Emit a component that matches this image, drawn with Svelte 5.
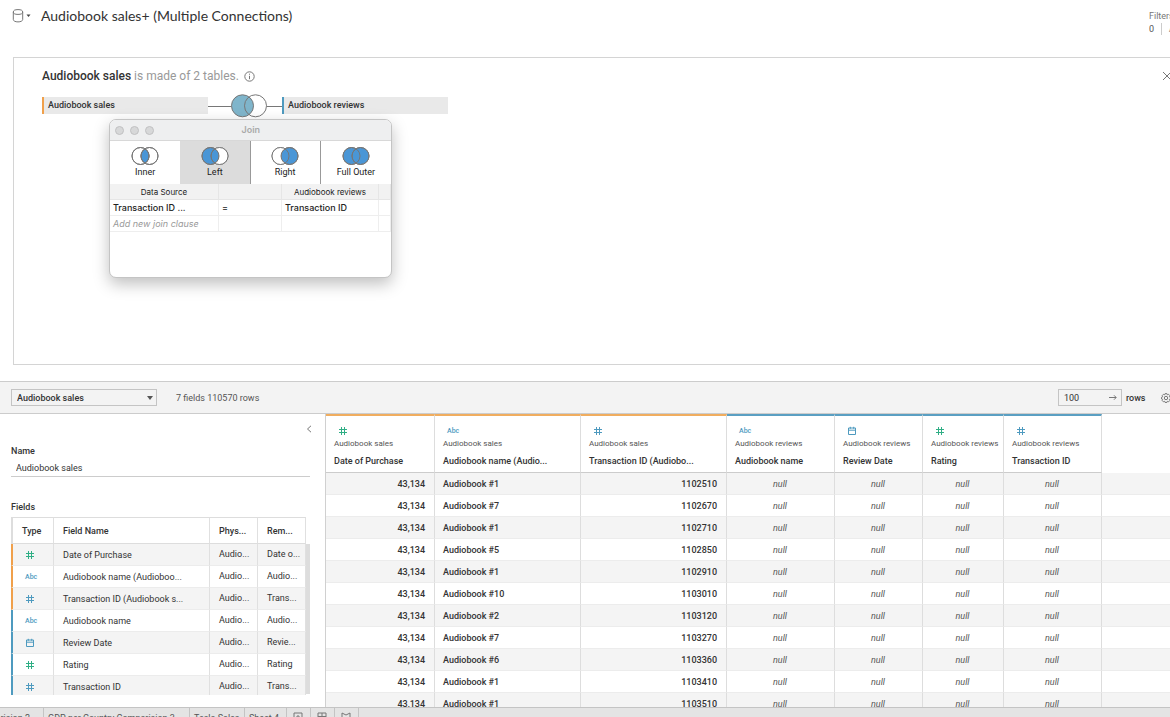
<script lang="ts">
  type Kind = 'number' | 'text' | 'date';

  interface Field {
    kind: Kind;
    measure?: boolean;
    source: 'sales' | 'reviews';
    name: string;
    heading: string;
    remote: string;
    width: number;
  }

  const fields: Field[] = [
    { kind: 'number', measure: true, source: 'sales', name: 'Date of Purchase', heading: 'Date of Purchase', remote: 'Date o...', width: 109 },
    { kind: 'text', source: 'sales', name: 'Audiobook name (Audioboo...', heading: 'Audiobook name (Audio...', remote: 'Audio...', width: 146 },
    { kind: 'number', source: 'sales', name: 'Transaction ID (Audiobook s...', heading: 'Transaction ID (Audiobo...', remote: 'Trans...', width: 146 },
    { kind: 'text', source: 'reviews', name: 'Audiobook name', heading: 'Audiobook name', remote: 'Audio...', width: 108 },
    { kind: 'date', source: 'reviews', name: 'Review Date', heading: 'Review Date', remote: 'Revie...', width: 88 },
    { kind: 'number', measure: true, source: 'reviews', name: 'Rating', heading: 'Rating', remote: 'Rating', width: 81 },
    { kind: 'number', source: 'reviews', name: 'Transaction ID', heading: 'Transaction ID', remote: 'Trans...', width: 98 }
  ];

  const rows = [
    ['Audiobook #1', '1102510'],
    ['Audiobook #7', '1102670'],
    ['Audiobook #1', '1102710'],
    ['Audiobook #5', '1102850'],
    ['Audiobook #1', '1102910'],
    ['Audiobook #10', '1103010'],
    ['Audiobook #2', '1103120'],
    ['Audiobook #7', '1103270'],
    ['Audiobook #6', '1103360'],
    ['Audiobook #1', '1103410'],
    ['Audiobook #1', '1103510']
  ];

  const joins = ['Inner', 'Left', 'Right', 'Full Outer'];
  let join = $state('Left');
  let tableName = $state('Audiobook sales');
  let limit = $state('100');
</script>

{#snippet typeIcon(field: Field)}
  {#if field.kind === 'text'}
    <span class="abc">Abc</span>
  {:else if field.kind === 'date'}
    <svg class="type" viewBox="0 0 10 10" aria-label="Date">
      <path d="M1.5 2h7v6.5h-7zM1.5 4.2h7M3.3.8v2M6.7.8v2" />
    </svg>
  {:else}
    <svg class="type" class:measure={field.measure} viewBox="0 0 10 10" aria-label="Number">
      <path d="M3.5 1v8M6.5 1v8M1 3.5h8M1 6.5h8" />
    </svg>
  {/if}
{/snippet}

{#snippet venn(kind: string)}
  <svg class="venn" viewBox="0 0 30 20" aria-hidden="true">
    <circle cx="10.5" cy="10" r="8.5" class:fill={kind === 'Left' || kind === 'Full Outer'} />
    <circle
      cx="19.5"
      cy="10"
      r="8.5"
      class:fill={kind === 'Right' || kind === 'Full Outer'}
    />
    {#if kind === 'Inner'}
      <path class="fill" d="M15 2.8a8.5 8.5 0 0 1 0 14.4a8.5 8.5 0 0 1 0-14.4z" />
    {:else if kind === 'Left'}
      <path class="blank" d="M15 2.8a8.5 8.5 0 1 1 0 14.4a8.5 8.5 0 0 0 0-14.4z" />
    {:else if kind === 'Right'}
      <path class="blank" d="M15 2.8a8.5 8.5 0 1 0 0 14.4a8.5 8.5 0 0 1 0-14.4z" />
    {/if}
    <circle cx="10.5" cy="10" r="8.5" />
    <circle cx="19.5" cy="10" r="8.5" />
  </svg>
{/snippet}

<div class="page">
  <header>
    <button class="source" type="button" aria-label="Data source">
      <svg width="20" height="16" viewBox="0 0 20 16">
        <ellipse cx="6" cy="4" rx="4.7" ry="2.4" />
        <path d="M1.3 4v7.5c0 1.4 2 2.4 4.7 2.4s4.7-1 4.7-2.4V4" />
        <path class="solid" d="M14.5 6.5h4l-2 2.6z" />
      </svg>
    </button>
    <h1>Audiobook sales+ (Multiple Connections)</h1>
    <div class="filters">
      <span>Filters</span>
      <div><b>0</b><a href="#add">Add</a></div>
    </div>
  </header>

  <section class="canvas">
    <div class="summary">
      <h2>Audiobook sales <span>is made of 2 tables.</span></h2>
      <svg width="11" height="11" viewBox="0 0 11 11" aria-label="Info">
        <circle cx="5.5" cy="5.5" r="4.7" />
        <path d="M5.5 4.8v3.4M5.5 2.7v1" />
      </svg>
      <button class="close" type="button" aria-label="Close">
        <svg width="10" height="10" viewBox="0 0 10 10"><path d="M1 1l8 8M9 1l-8 8" /></svg>
      </button>
    </div>

    <div class="relation">
      <div class="pill sales">Audiobook sales</div>
      <svg width="74" height="25" viewBox="0 0 74 25" aria-label="Left join">
        <path d="M0 13.5h23M59 13.5h15" />
        <circle class="left" cx="34.5" cy="12.8" r="11" />
        <circle cx="47.5" cy="12.8" r="11" />
      </svg>
      <div class="pill reviews">Audiobook reviews</div>
    </div>

    <div class="dialog" role="dialog" aria-label="Join">
      <div class="titlebar">
        <button type="button" aria-label="Close window"></button>
        <button type="button" aria-label="Minimize"></button>
        <button type="button" aria-label="Zoom"></button>
        <strong>Join</strong>
      </div>
      <div class="kinds">
        {#each joins as kind (kind)}
          <button
            type="button"
            class:active={join === kind}
            aria-pressed={join === kind}
            onclick={() => (join = kind)}
          >
            {@render venn(kind)}
            {kind}
          </button>
        {/each}
      </div>
      <table>
        <colgroup><col class="a" /><col class="b" /><col class="c" /><col /></colgroup>
        <thead>
          <tr><th>Data Source</th><th></th><th>Audiobook reviews</th><th></th></tr>
        </thead>
        <tbody>
          <tr><td>Transaction ID ...</td><td>=</td><td>Transaction ID</td><td></td></tr>
          <tr><td class="hint">Add new join clause</td><td></td><td></td><td></td></tr>
        </tbody>
      </table>
    </div>
  </section>

  <div class="toolbar">
    <div class="picker">
      <select aria-label="Table">
        <option>Audiobook sales</option>
        <option>Audiobook reviews</option>
      </select>
      <svg width="6" height="4" viewBox="0 0 6 4"><path d="M0 0h6L3 4z" /></svg>
    </div>
    <span class="count">7 fields 110570 rows</span>
    <div class="limit">
      <input id="limit" bind:value={limit} />
      <svg width="8" height="7" viewBox="0 0 8 7"><path d="M0 3.5h7M5 1.3l2.2 2.2L5 5.7" /></svg>
    </div>
    <label for="limit">rows</label>
    <button class="gear" type="button" aria-label="Settings">
      <svg width="10" height="10" viewBox="0 0 10 10">
        <path d="M4 .7h2l.4 1.1 1.2-.5 1.2 1.3-.5 1.1 1.1.5v1.8l-1.1.5.5 1.1-1.2 1.2-1.2-.5-.4 1.1H4l-.4-1.1-1.2.5-1.2-1.2.5-1.1-1.1-.5V4.2l1.1-.5-.5-1.1 1.2-1.3 1.2.5z" />
        <circle cx="5" cy="5" r="1.7" />
      </svg>
    </button>
  </div>

  <main>
    <aside>
      <button class="collapse" type="button" aria-label="Collapse">
        <svg width="6" height="8" viewBox="0 0 6 8"><path d="M5 .8L1.5 4 5 7.2" /></svg>
      </button>
      <label for="name">Name</label>
      <input id="name" bind:value={tableName} />
      <h3>Fields</h3>
      <div class="scroller">
        <table>
          <colgroup><col class="t" /><col class="n" /><col class="p" /><col class="p" /></colgroup>
          <thead>
            <tr><th>Type</th><th>Field Name</th><th>Phys...</th><th>Rem...</th></tr>
          </thead>
          <tbody>
            {#each fields as field (field.name)}
              <tr>
                <td class={field.source}>{@render typeIcon(field)}</td>
                <td>{field.name}</td>
                <td class="origin">Audio...</td>
                <td class="origin">{field.remote}</td>
              </tr>
            {/each}
          </tbody>
        </table>
        <div class="thumb"></div>
      </div>
    </aside>

    <div class="grid">
      <table>
        <colgroup>
          {#each fields as field (field.name)}
            <col style:width="{field.width}px" />
          {/each}
          <col />
        </colgroup>
        <thead>
          <tr>
            {#each fields as field (field.name)}
              <th class={field.source}>
                <div class="icon">{@render typeIcon(field)}</div>
                <small>Audiobook {field.source}</small>
                <span>{field.heading}</span>
              </th>
            {/each}
            <th class="rest"></th>
          </tr>
        </thead>
        <tbody>
          {#each rows as [book, id]}
            <tr>
              <td class="num">43,134</td>
              <td>{book}</td>
              <td class="num">{id}</td>
              <td class="null">null</td>
              <td class="null">null</td>
              <td class="null">null</td>
              <td class="null">null</td>
              <td class="rest"></td>
            </tr>
          {/each}
        </tbody>
      </table>
    </div>
  </main>

  <footer>
    <a class="first" href="#s1">Comparision 2</a>
    <a class="second" href="#s2">GDP per Country Comparision 3</a>
    <a class="third" href="#s3">Tesla Sales</a>
    <a class="fourth" href="#s4">Sheet 4</a>
    <button type="button" aria-label="New worksheet">
      <svg width="10" height="10" viewBox="0 0 10 10"><path d="M1 1h8v8H1zM5 3v4M3 5h4" /></svg>
    </button>
    <button type="button" aria-label="New dashboard">
      <svg width="10" height="10" viewBox="0 0 10 10"><path d="M1 1h8v8H1zM5 1v8M1 4.5h8" /></svg>
    </button>
    <button type="button" aria-label="New story">
      <svg width="10" height="10" viewBox="0 0 10 10"><path d="M1 1l4 2 4-2v8H1z" /></svg>
    </button>
  </footer>
</div>

<style>
  :global(body) {
    margin: 0;
    background: #fff;
  }

  .page {
    display: flex;
    flex-direction: column;
    height: 100vh;
    overflow: hidden;
    color: #333;
    font-family: Roboto, sans-serif;
    font-size: 9px;
    line-height: 12px;
  }

  .page * {
    box-sizing: border-box;
  }

  button,
  input,
  select {
    margin: 0;
    padding: 0;
    border: 0;
    background: none;
    color: inherit;
    font: inherit;
  }

  svg {
    display: block;
    flex: none;
    fill: none;
    stroke: #777;
    stroke-width: 1;
  }

  h1,
  h2,
  h3 {
    margin: 0;
  }

  table {
    table-layout: fixed;
    border-collapse: separate;
    border-spacing: 0;
  }

  th,
  td {
    padding: 0;
    overflow: hidden;
    white-space: nowrap;
    text-align: left;
  }

  header {
    display: flex;
    flex: none;
    height: 57px;
    padding-left: 12px;
  }

  .source {
    height: 16px;
    margin-top: 8px;
  }

  .solid {
    fill: #444;
    stroke: none;
  }

  h1 {
    margin: 6px 0 0 9px;
    font-family: Lato, sans-serif;
    font-size: 14px;
    font-weight: 400;
    line-height: 20px;
  }

  .filters {
    flex: none;
    width: 21px;
    margin: 10px 0 0 auto;
    color: #777;
    white-space: nowrap;
  }

  .filters div {
    display: flex;
    margin-top: 1px;
  }

  .filters b {
    flex: none;
    width: 13px;
    border-right: 1px solid #ccc;
    font-weight: 400;
    color: #555;
  }

  .filters a {
    margin-left: 7px;
    color: inherit;
    text-decoration: none;
  }

  .canvas {
    position: relative;
    flex: none;
    height: 308px;
    margin-left: 13px;
    padding: 9px 0 0 28px;
    border: 1px solid #d4d4d4;
    border-right: 0;
  }

  .summary {
    display: flex;
    align-items: center;
    height: 18px;
  }

  h2 {
    margin-right: 5px;
    font-size: 12px;
    font-weight: 500;
    line-height: 18px;
  }

  h2 span {
    color: #999;
    font-weight: 400;
  }

  .close {
    width: 8px;
    margin-left: auto;
  }

  .relation {
    display: flex;
    align-items: center;
    height: 25px;
    margin-top: 8px;
  }

  .pill {
    width: 166px;
    height: 17px;
    padding-left: 4px;
    border-left: 2px solid #f0a04b;
    background: #e9e9e9;
    font-weight: 500;
    line-height: 17px;
  }

  .pill.reviews {
    border-color: #4e9abf;
  }

  .left {
    fill: #7fb5cb;
  }

  .dialog {
    position: absolute;
    top: 61px;
    left: 95px;
    width: 283px;
    height: 159px;
    overflow: hidden;
    border: 1px solid #c4c4c4;
    border-radius: 7px;
    background: #fff;
    box-shadow: 0 6px 16px rgb(0 0 0 / 25%);
    color: #222;
    font-family: Inter, sans-serif;
  }

  .titlebar {
    display: grid;
    grid-template-columns: 9px 9px 9px 1fr;
    gap: 6px;
    align-items: center;
    height: 20px;
    padding: 0 108px 0 5px;
    background: #eeeff0;
  }

  .titlebar button {
    height: 9px;
    border: 1px solid #c0c0c2;
    border-radius: 50%;
    background: #d7d8d9;
  }

  .titlebar strong {
    padding-right: 23px;
    color: #aaa;
    font-weight: 600;
    text-align: right;
  }

  .kinds {
    display: grid;
    grid-template-columns: repeat(4, 1fr);
    height: 44px;
    border-top: 1px solid #d8d8d8;
  }

  .kinds button {
    display: flex;
    flex-direction: column;
    align-items: center;
    padding-top: 5px;
    border-right: 1px solid #999;
    font-family: Roboto, sans-serif;
  }

  .kinds button:first-child,
  .kinds button:last-child {
    border-right: 0;
  }

  .kinds .active {
    background: #dcdcdc;
  }

  .venn {
    width: 30px;
    height: 20px;
  }

  .venn .fill {
    fill: #4a96d6;
  }

  .venn .blank {
    fill: #fff;
    stroke: none;
  }

  .dialog table {
    width: 100%;
  }

  .dialog .a {
    width: 109px;
  }

  .dialog .b {
    width: 63px;
  }

  .dialog .c {
    width: 97px;
  }

  .dialog th {
    height: 16px;
    border-right: 1px solid #e6e6e6;
    border-bottom: 1px solid #e6e6e6;
    background: #f2f2f2;
    font-size: 8px;
    font-weight: 400;
    text-align: center;
  }

  .dialog td {
    height: 16px;
    padding-left: 3px;
    border-right: 1px solid #eee;
    border-bottom: 1px solid #eee;
    font-weight: 500;
  }

  .dialog .hint {
    color: #999;
    font-style: italic;
    font-weight: 400;
  }

  .toolbar {
    display: flex;
    flex: none;
    align-items: center;
    height: 33px;
    margin-top: 16px;
    padding-left: 11px;
    border-top: 1px solid #ccc;
    border-bottom: 1px solid #ccc;
    background: #f3f3f3;
  }

  .picker,
  .limit {
    display: flex;
    align-items: center;
    height: 17px;
    border: 1px solid #c4c4c4;
  }

  .picker {
    width: 146px;
    padding-right: 3px;
  }

  .picker select {
    flex: 1;
    height: 15px;
    padding-left: 5px;
    appearance: none;
    font-weight: 500;
  }

  .picker svg {
    fill: #555;
    stroke: none;
  }

  .count {
    margin-left: 19px;
    color: #555;
  }

  .limit {
    width: 64px;
    margin: 0 4px 0 auto;
    padding-right: 4px;
  }

  .limit input {
    flex: 1;
    min-width: 0;
    padding-left: 5px;
  }

  .toolbar label {
    width: 35px;
    font-weight: 500;
  }

  .gear {
    width: 9px;
  }

  main {
    display: flex;
    flex: 1;
    min-height: 0;
    overflow: hidden;
  }

  aside {
    display: flex;
    flex: none;
    flex-direction: column;
    width: 326px;
    padding: 11px 15px 0 11px;
    border-right: 1px solid #d0d0d0;
  }

  .collapse {
    align-self: flex-end;
    width: 4px;
    height: 8px;
  }

  aside label,
  h3 {
    font-size: 9px;
    font-weight: 500;
    line-height: 12px;
  }

  aside label {
    margin-top: 12px;
  }

  aside input {
    height: 18px;
    margin-top: 2px;
    padding-left: 5px;
    border-bottom: 1px solid #ccc;
  }

  h3 {
    margin: 24px 0 4px;
  }

  .scroller {
    display: flex;
    height: 178px;
    overflow: hidden;
  }

  .scroller table {
    flex: none;
    width: 295px;
  }

  .scroller .t {
    width: 43px;
  }

  .scroller .n {
    width: 156px;
  }

  .scroller .p {
    width: 48px;
  }

  .scroller th {
    height: 27px;
    padding-left: 9px;
    border-top: 1px solid #ddd;
    border-right: 1px solid #e0e0e0;
    border-bottom: 1px solid #ddd;
    font-weight: 500;
  }

  .scroller th:first-child {
    border-left: 2px solid #ddd;
  }

  .scroller td {
    height: 22px;
    padding-left: 9px;
    border-right: 1px solid #e0e0e0;
    border-bottom: 1px solid #ececec;
  }

  .scroller .origin {
    padding-bottom: 2px;
  }

  .scroller td:first-child {
    padding-left: 12px;
    border-left: 2px solid #f0a04b;
  }

  .scroller td.reviews {
    border-left-color: #4e9abf;
  }

  tbody tr:nth-child(odd) {
    background: #f4f4f4;
  }

  .dialog tbody tr {
    background: #fff;
  }

  .thumb {
    width: 5px;
    height: 150px;
    margin-top: 27px;
    background: #ddd;
  }

  .type {
    width: 10px;
    height: 10px;
    stroke: #4e9abf;
  }

  .type.measure {
    stroke: #2fae85;
  }

  .abc {
    color: #4e9abf;
    font-size: 7px;
    font-weight: 500;
  }

  .grid {
    flex: 1;
    min-width: 0;
    overflow: hidden;
  }

  .grid table {
    width: 100%;
  }

  .grid th {
    height: 59px;
    padding: 8px 0 0 8px;
    border-top: 2px solid #f0ad5f;
    border-right: 1px solid #ddd;
    border-bottom: 1px solid #ccc;
    vertical-align: top;
  }

  .grid th.reviews {
    border-top-color: #5a9fc2;
  }

  .icon {
    display: flex;
    align-items: center;
    height: 14px;
    padding-left: 4px;
  }

  .grid small,
  .grid th span {
    display: block;
  }

  .grid small {
    color: #555;
    font-size: 8px;
    font-weight: 400;
  }

  .grid th > span {
    margin-top: 5px;
    font-weight: 500;
  }

  .grid td {
    height: 22px;
    padding: 0 9px 0 8px;
    border-right: 1px solid #ddd;
    border-bottom: 1px solid #ececec;
    font-weight: 500;
  }

  .grid .num {
    text-align: right;
  }

  .grid .null {
    color: #555;
    font-style: italic;
    font-weight: 400;
    text-align: center;
  }

  .grid .rest {
    border-top: 0;
    border-right: 0;
  }

  .grid th.rest {
    border-bottom: 0;
  }

  footer {
    display: flex;
    flex: none;
    height: 10px;
    overflow: hidden;
    border-top: 1px solid #c4c4c4;
    background: #e4e4e4;
  }

  footer a,
  footer button {
    display: flex;
    flex: none;
    height: 20px;
    padding: 4px 0 0 4px;
    border-right: 1px solid #c4c4c4;
    color: #555;
    text-decoration: none;
    white-space: nowrap;
  }

  footer .first {
    justify-content: flex-end;
    width: 44px;
    padding-right: 13px;
  }

  footer .second {
    width: 146px;
  }

  footer .third {
    width: 55px;
  }

  footer .fourth {
    width: 42px;
  }

  footer button {
    width: 24px;
    padding-left: 6px;
  }
</style>
